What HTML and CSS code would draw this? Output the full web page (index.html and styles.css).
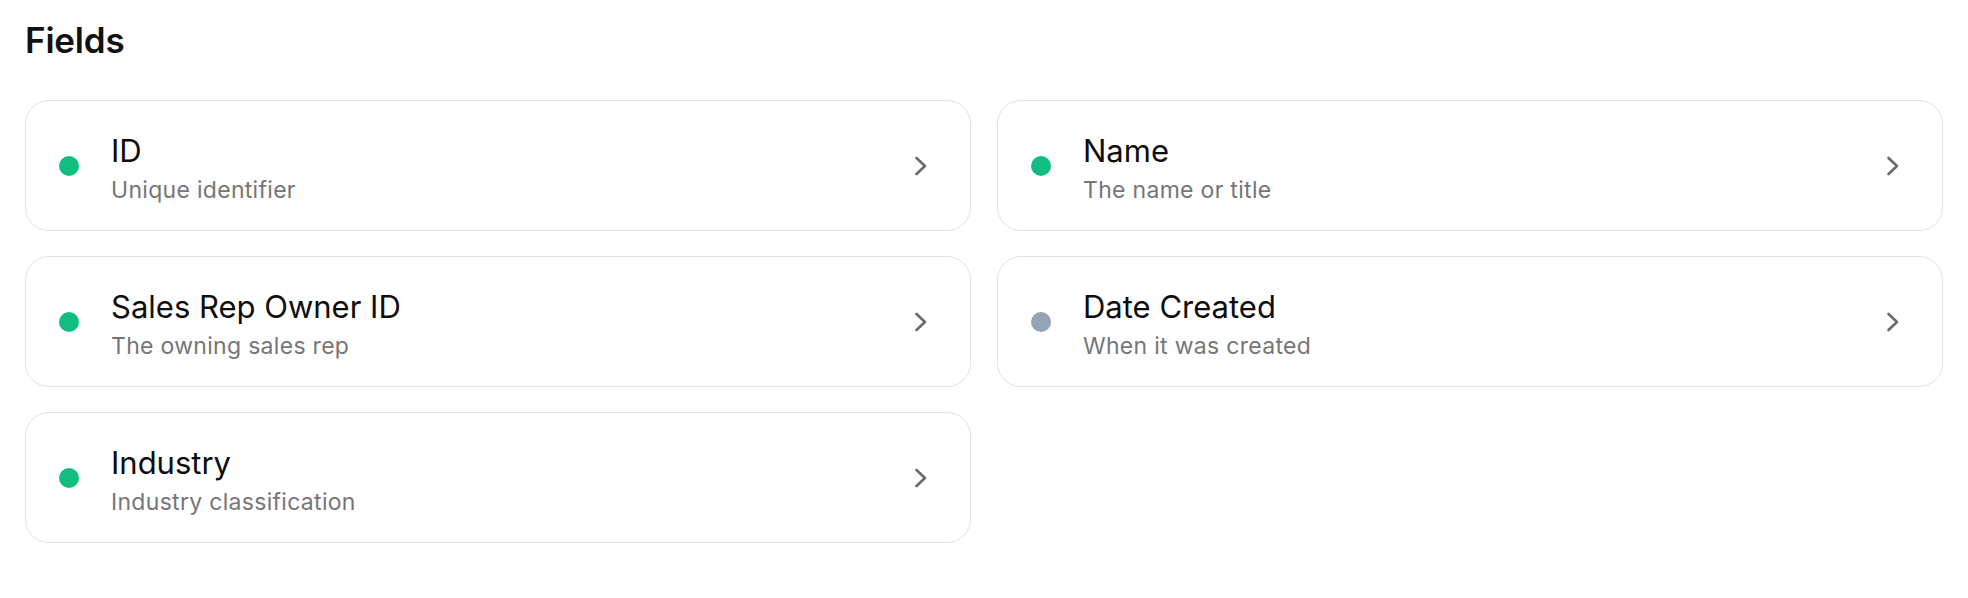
FILE: index.html
```html
<!DOCTYPE html>
<html lang="en">

<head>
    <meta charset="UTF-8">
    <meta name="viewport" content="width=device-width, initial-scale=1.0">
    <title>Fields</title>
    <link rel="stylesheet" href="styles.css">
</head>

<body>
    <div class="page">
        <h1 class="page-title">Fields</h1>

        <div class="field-list">
            <div class="field-card">
                <span class="dot dot-active"></span>
                <div class="field-text">
                    <div class="field-name">ID</div>
                    <div class="field-desc">Unique identifier</div>
                </div>
                <svg class="chevron" width="14" height="20" viewBox="0 0 14 20">
                    <polyline points="2.5,2 11,10 2.5,18" />
                </svg>
            </div>

            <div class="field-card">
                <span class="dot dot-active"></span>
                <div class="field-text">
                    <div class="field-name">Name</div>
                    <div class="field-desc">The name or title</div>
                </div>
                <svg class="chevron" width="14" height="20" viewBox="0 0 14 20">
                    <polyline points="2.5,2 11,10 2.5,18" />
                </svg>
            </div>

            <div class="field-card">
                <span class="dot dot-active"></span>
                <div class="field-text">
                    <div class="field-name">Sales Rep Owner ID</div>
                    <div class="field-desc">The owning sales rep</div>
                </div>
                <svg class="chevron" width="14" height="20" viewBox="0 0 14 20">
                    <polyline points="2.5,2 11,10 2.5,18" />
                </svg>
            </div>

            <div class="field-card">
                <span class="dot dot-muted"></span>
                <div class="field-text">
                    <div class="field-name">Date Created</div>
                    <div class="field-desc">When it was created</div>
                </div>
                <svg class="chevron" width="14" height="20" viewBox="0 0 14 20">
                    <polyline points="2.5,2 11,10 2.5,18" />
                </svg>
            </div>

            <div class="field-card">
                <span class="dot dot-active"></span>
                <div class="field-text">
                    <div class="field-name">Industry</div>
                    <div class="field-desc">Industry classification</div>
                </div>
                <svg class="chevron" width="14" height="20" viewBox="0 0 14 20">
                    <polyline points="2.5,2 11,10 2.5,18" />
                </svg>
            </div>
        </div>
    </div>
</body>

</html>
```

FILE: styles.css
```css
body {
    margin: 0;
    background-color: #fff;
    font-family: Inter, "Liberation Sans", sans-serif;
    color: #111;
}

.page {
    padding: 20px 25px 40px 25px;
}

.page-title {
    margin: 0 0 40px 0;
    font-size: 35px;
    line-height: 40px;
    font-weight: 600;
    letter-spacing: -0.2px;
}

.field-list {
    display: grid;
    grid-template-columns: 1fr 1fr;
    gap: 25px 26px;
}

.field-card {
    height: 131px;
    box-sizing: border-box;
    border: 1.5px solid #e2e2e2;
    border-radius: 24px;
    padding: 0 42px 0 33px;
    display: flex;
    align-items: center;
    gap: 32px;
}

.dot {
    width: 20px;
    height: 20px;
    border-radius: 50%;
    flex-shrink: 0;
}

.dot-active {
    background-color: #10bf7f;
}

.dot-muted {
    background-color: #94a3b8;
}

.field-text {
    flex: 1;
    padding-top: 4px;
}

.field-name {
    font-size: 31px;
    line-height: 40px;
    font-weight: 400;
    color: #0d0d0d;
}

.field-desc {
    margin-top: 5px;
    font-size: 23px;
    line-height: 28px;
    letter-spacing: 0.3px;
    color: #767676;
}

.chevron {
    flex-shrink: 0;
}

.chevron polyline {
    fill: none;
    stroke: #6b6b6b;
    stroke-width: 2.6;
    stroke-linecap: round;
    stroke-linejoin: round;
}
```
